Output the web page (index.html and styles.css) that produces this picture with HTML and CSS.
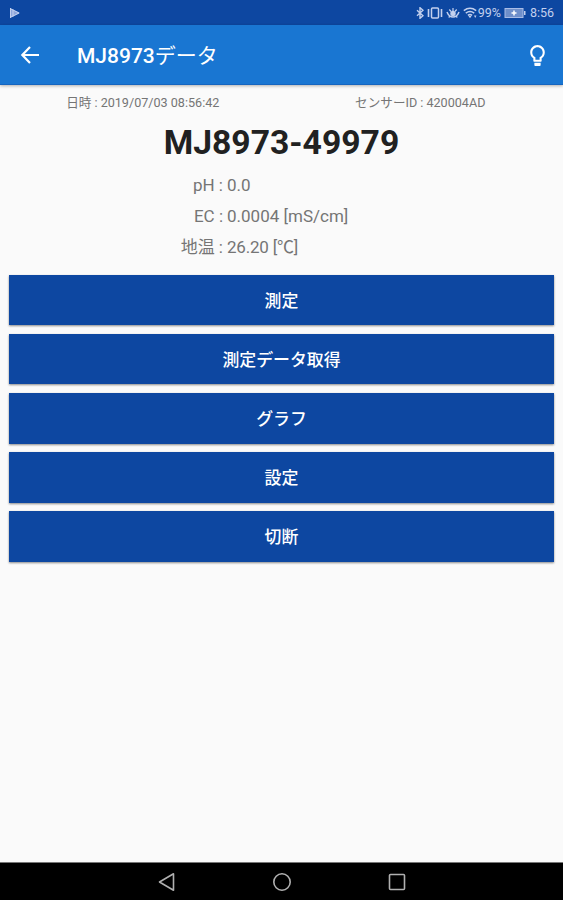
FILE: index.html
```
<!DOCTYPE html>
<html lang="ja">
<head>
    <meta charset="UTF-8">
    <meta name="viewport" content="width=device-width, initial-scale=1.0">
    <title>MJ8973データ</title>
    <link rel="stylesheet" href="styles.css">
</head>
<body>
    <div class="status-bar">
        <svg class="play" width="12" height="12" viewBox="0 0 12 12">
            <path d="M1 1l10 5-10 5z" fill="#8ea6db"/>
            <path d="M1.500 1v10M4 2.500v7M1 1.500l9 4.500-9 4.500" stroke="#c3d0ee" stroke-width="1" fill="none"/>
        </svg>
        <div class="status-icons">
            <!-- Bluetooth -->
            <svg class="bluetooth" width="8" height="12" viewBox="0 0 8 12">
                <path d="M1 3.300l6 5.400-3 2.600V.7l3 2.600-6 5.400" fill="none" stroke="#c3d0ee" stroke-width="1.400"/>
            </svg>
            <!-- Vibration -->
            <svg class="vibrate" width="16" height="12" viewBox="0 0 16 12">
                <rect x="4.500" y="1" width="7" height="10" rx="1" fill="none" stroke="#c3d0ee" stroke-width="1.500"/>
                <path d="M1.500 2v8M14.500 2v8" stroke="#c3d0ee" stroke-width="1.600"/>
            </svg>
            <!-- Eye comfort -->
            <svg class="eye" width="14" height="12" viewBox="0 0 14 12">
                <path d="M1 5q2 5 6 5t6-5" fill="none" stroke="#c3d0ee" stroke-width="1.500"/>
                <circle cx="7" cy="6.500" r="2.700" fill="#c3d0ee"/>
                <path d="M7 1v4M3.300 2.500l1.700 2M10.700 2.500L9 4.500M2.700 10.500L4 9M11.300 10.500L10 9" stroke="#c3d0ee" stroke-width="1.200"/>
            </svg>
            <!-- Wi-Fi -->
            <svg class="wifi" width="15" height="12" viewBox="0 0 15 12">
                <path d="M.8 3.600q6.200-4.600 12.400 0M2.800 6.100q4.200-3.300 8.400 0M4.900 8.400q2.100-1.700 4.200 0" fill="none" stroke="#c3d0ee" stroke-width="1.500"/>
                <path d="M5.300 8.800h3.400L7 11.200zM11 8.500h2.500L12.200 11z" fill="#c3d0ee"/>
            </svg>
            <span class="percent">99%</span>
            <!-- Battery -->
            <svg class="battery" width="22" height="12" viewBox="0 0 22 12">
                <rect x="1" y="1.500" width="18" height="9" fill="#6f8fca" stroke="#a9bce6"/>
                <path d="M20 4h1.500v4H20z" fill="#c3d0ee"/>
                <path d="M10 3.500v5M7.500 6h5" stroke="#fff" stroke-width="1.500"/>
            </svg>
            <span class="clock">8:56</span>
        </div>
    </div>

    <header class="app-bar">
        <svg class="back" width="20" height="20" viewBox="0 0 20 20">
            <path d="M19 10H3M10 2L2.300 10l7.700 8" fill="none" stroke="#fff" stroke-width="2.200"/>
        </svg>
        <h1>MJ8973<span class="kana">データ</span></h1>
        <svg class="bulb" width="25" height="25" viewBox="0 0 24 24">
            <path fill="#fff" d="M9 21c0 .55.45 1 1 1h4c.55 0 1-.45 1-1v-2H9v2zm3-19C8.140 2 5 5.140 5 9c0 2.380 1.190 4.470 3 5.740V17c0 .55.45 1 1 1h6c.55 0 1-.45 1-1v-2.260c1.810-1.270 3-3.360 3-5.740 0-3.860-3.140-7-7-7zm2.850 11.100l-.85.6V16h-4v-2.300l-.85-.6C7.800 12.160 7 10.630 7 9c0-2.760 2.240-5 5-5s5 2.240 5 5c0 1.630-.8 3.160-2.150 4.100z"/>
        </svg>
    </header>

    <main class="content">
        <div class="meta">
            <span>日時 : 2019/07/03 08:56:42</span>
            <span>センサーID : 420004AD</span>
        </div>
        <h2>MJ8973-49979</h2>
        <div class="readings">
            <span class="label">pH :</span><span>0.0</span>
            <span class="label">EC :</span><span>0.0004 [mS/cm]</span>
            <span class="label">地温 :</span><span class="temp">26.20 [℃]</span>
        </div>
        <div class="buttons">
            <button>測定</button>
            <button>測定データ取得</button>
            <button>グラフ</button>
            <button>設定</button>
            <button>切断</button>
        </div>
    </main>

    <nav class="nav-bar">
        <svg width="20" height="20" viewBox="0 0 20 20">
            <path d="M16.500 1.800v16.400L2.500 10z" fill="none" stroke="#b0b0b0" stroke-width="1.600" stroke-linejoin="round"/>
        </svg>
        <svg width="20" height="20" viewBox="0 0 20 20">
            <circle cx="10" cy="10" r="8.200" fill="none" stroke="#b0b0b0" stroke-width="1.600"/>
        </svg>
        <svg width="20" height="20" viewBox="0 0 20 20">
            <rect x="2.500" y="2.500" width="15" height="15" rx="1" fill="none" stroke="#b0b0b0" stroke-width="1.600"/>
        </svg>
    </nav>
</body>
</html>
```
FILE: styles.css
```
* {
    box-sizing: border-box;
}
body {
    font-family: Roboto, "Noto Sans CJK JP", sans-serif;
    background-color: #fafafa;
    color: #757575;
    margin: 0;
    height: 900px;
    display: flex;
    flex-direction: column;
    overflow: hidden;
}
svg {
    flex: none;
}
.status-bar {
    height: 25px;
    padding: 1px 9px 0 9px;
    background: #0d47a1;
    color: #c3d0ee;
    display: flex;
    align-items: center;
    justify-content: space-between;
}
.status-icons {
    display: flex;
    align-items: center;
    font-size: 12.5px;
    line-height: 16px;
}
.vibrate {
    margin-left: 3px;
}
.eye {
    margin-left: 3px;
}
.wifi {
    margin-left: 3px;
}
.battery {
    margin: 0 4px 0 3px;
}
.app-bar {
    height: 60px;
    padding: 1px 13px 0 20px;
    background: #1976d2;
    border-bottom: 1px solid #1565c0;
    box-shadow: 0 1px 3px rgba(0, 0, 0, 0.3);
    color: #fff;
    display: flex;
    align-items: center;
}
.app-bar h1 {
    margin: 1px auto 0 37px;
    font-size: 21px;
    font-weight: 500;
    line-height: 30px;
}
.kana {
    font-weight: 400;
}
.content {
    flex: 1;
}
.meta {
    display: grid;
    grid-template-columns: 1fr 1fr;
    padding: 8px 4px 0;
    font-size: 12.6px;
    line-height: 20px;
    text-align: center;
}
.content h2 {
    margin: 10px 0 0;
    font-size: 33.7px;
    font-weight: 700;
    line-height: 40px;
    text-align: center;
    color: #212121;
}
.readings {
    display: grid;
    grid-template-columns: 223px 1fr;
    grid-auto-rows: 31.3px;
    column-gap: 4px;
    align-items: center;
    margin-top: 6px;
    font-size: 17px;
    line-height: 24px;
}
.label {
    text-align: right;
}
.temp {
    letter-spacing: -0.2px;
}
.buttons {
    display: flex;
    flex-direction: column;
    gap: 8.6px;
    padding: 12px 9px 0;
}
button {
    height: 50.5px;
    padding: 0 0 2px;
    border: none;
    background-color: #0d47a1;
    box-shadow: 0 1px 2px rgba(0, 0, 0, 0.45);
    color: #fff;
    font-family: inherit;
    font-size: 16.9px;
    font-weight: 500;
}
.nav-bar {
    height: 38px;
    border-top: 1px solid #777;
    background: #000;
    display: flex;
    align-items: center;
    justify-content: center;
    gap: 95px;
}
```
